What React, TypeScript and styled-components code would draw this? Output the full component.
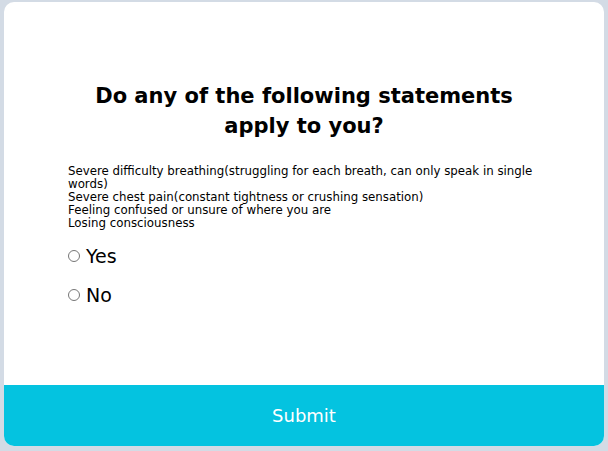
import React, { useState } from 'react';
import styled, { createGlobalStyle } from 'styled-components';

const GlobalStyle = createGlobalStyle`
  html, body {
    margin: 0;
    padding: 0;
    background: #d3dbe5;
  }
  body {
    font-family: "DejaVu Sans", "Open Sans", sans-serif;
  }
`;

const Page = styled.div`
  padding: 2px 4px 5px 4px;
`;

const Card = styled.form`
  height: 444px;
  display: flex;
  flex-direction: column;
  background: #ffffff;
  border-radius: 10px;
  overflow: hidden;
`;

const Body = styled.div`
  flex: 1;
  padding: 79px 64px 0 64px;
`;

const Title = styled.h2`
  max-width: 440px;
  margin: 0 auto 24px auto;
  text-align: center;
  font-size: 21px;
  line-height: 30px;
  font-weight: 600;
  color: #000;
`;

const Statements = styled.p`
  margin: 0 0 6px 0;
  font-size: 11.8px;
  line-height: 13px;
  color: #000;
`;

const Option = styled.label`
  display: flex;
  align-items: center;
  gap: 6px;
  height: 39px;
  font-size: 19px;
  color: #000;
  cursor: pointer;

  input {
    margin: 0;
    width: 12px;
    height: 12px;
  }
`;

const SubmitButton = styled.button`
  height: 61px;
  border: none;
  background: #04c3e0;
  color: #ffffff;
  font-family: inherit;
  font-size: 18px;
  cursor: pointer;
`;

const statements = [
  'Severe difficulty breathing(struggling for each breath, can only speak in single words)',
  'Severe chest pain(constant tightness or crushing sensation)',
  'Feeling confused or unsure of where you are',
  'Losing consciousness',
];

const App = () => {
  const [answer, setAnswer] = useState<string>('');

  return (
    <Page>
      <GlobalStyle />
      <Card onSubmit={(e) => e.preventDefault()}>
        <Body>
          <Title>Do any of the following statements apply to you?</Title>
          <Statements>
            {statements.map((s, i) => (
              <React.Fragment key={s}>
                {s}
                {i < statements.length - 1 && <br />}
              </React.Fragment>
            ))}
          </Statements>
          {['Yes', 'No'].map((opt) => (
            <Option key={opt}>
              <input
                type="radio"
                name="answer"
                value={opt}
                checked={answer === opt}
                onChange={() => setAnswer(opt)}
              />
              {opt}
            </Option>
          ))}
        </Body>
        <SubmitButton type="submit">Submit</SubmitButton>
      </Card>
    </Page>
  );
};

export default App;
